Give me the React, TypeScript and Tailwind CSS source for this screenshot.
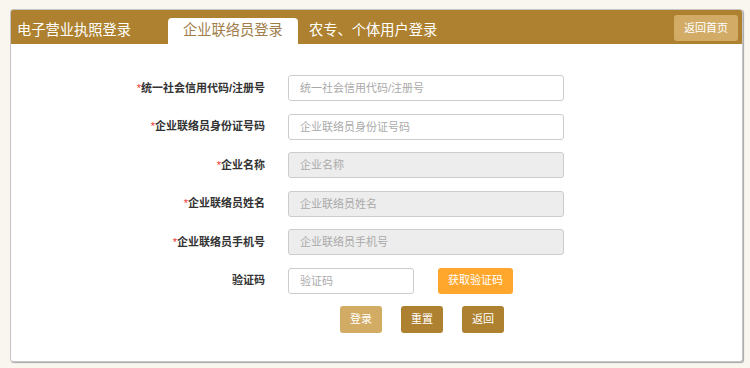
import React from 'react';

const font = { fontFamily: '"Liberation Sans", "Noto Sans CJK SC", sans-serif' };

type Field = {
  label: string;
  placeholder: string;
  required: boolean;
  disabled?: boolean;
};

const fields: Field[] = [
  { label: '统一社会信用代码/注册号', placeholder: '统一社会信用代码/注册号', required: true },
  { label: '企业联络员身份证号码', placeholder: '企业联络员身份证号码', required: true },
  { label: '企业名称', placeholder: '企业名称', required: true, disabled: true },
  { label: '企业联络员姓名', placeholder: '企业联络员姓名', required: true, disabled: true },
  { label: '企业联络员手机号', placeholder: '企业联络员手机号', required: true, disabled: true },
];

function Label({ text, required }: { text: string; required: boolean }) {
  return (
    <label className="w-[277px] pr-[23px] text-right text-[11px] font-bold text-[#333]">
      {required && <span className="text-[#e33] font-normal">*</span>}
      {text}
    </label>
  );
}

function App() {
  return (
    <div className="min-h-screen w-[750px] h-[368px] bg-[#f9f6ef] pt-[9px] pl-[10px]" style={font}>
      <div className="w-[733px] h-[353px] bg-white border border-[#c4c4c4] rounded-[3px] shadow-[1px_1px_1px_#a8a8a8] overflow-hidden">
        {/* header */}
        <div className="h-[34px] bg-[#ad812f] flex items-end relative">
          <div className="h-[26px] flex items-center pl-[6px] text-white text-[14.25px] w-[157px]">电子营业执照登录</div>
          <div className="h-[26px] w-[130px] bg-white rounded-t-[4px] flex items-center justify-center text-[14.25px] text-[#a07d4a]">
            企业联络员登录
          </div>
          <div className="h-[26px] flex items-center pl-[11px] text-white text-[14.25px]">农专、个体用户登录</div>
          <button className="absolute right-[4px] top-[5px] w-[64px] h-[26px] rounded-[3px] bg-[#d2ac67] text-white text-[11px]">
            返回首页
          </button>
        </div>

        {/* form */}
        <div className="pt-[31px] flex flex-col gap-[12.5px]">
          {fields.map((f) => (
            <div key={f.label} className="flex items-center h-[26px]">
              <Label text={f.label} required={f.required} />
              <input
                disabled={f.disabled}
                placeholder={f.placeholder}
                className={
                  'w-[276px] h-[26px] border border-[#ccc] rounded-[3px] px-[11px] text-[11px] outline-none placeholder:text-[#aaa] ' +
                  (f.disabled ? 'bg-[#ededed]' : 'bg-white')
                }
              />
            </div>
          ))}
          <div className="flex items-center h-[26px]">
            <Label text="验证码" required={false} />
            <input
              placeholder="验证码"
              className="w-[126px] h-[26px] border border-[#ccc] rounded-[3px] px-[11px] text-[11px] outline-none bg-white placeholder:text-[#aaa]"
            />
            <button className="ml-[24px] w-[75px] h-[26px] rounded-[3px] bg-[#ffa72c] text-white text-[11px]">获取验证码</button>
          </div>
          <div className="flex items-center h-[27px] pl-[329px] gap-[19px]">
            <button className="w-[42px] h-[27px] rounded-[3px] bg-[#d2ab64] text-white text-[11px]">登录</button>
            <button className="w-[42px] h-[27px] rounded-[3px] bg-[#ad812f] text-white text-[11px]">重置</button>
            <button className="w-[42px] h-[27px] rounded-[3px] bg-[#ad812f] text-white text-[11px]">返回</button>
          </div>
        </div>
      </div>
    </div>
  );
}

export default App;
